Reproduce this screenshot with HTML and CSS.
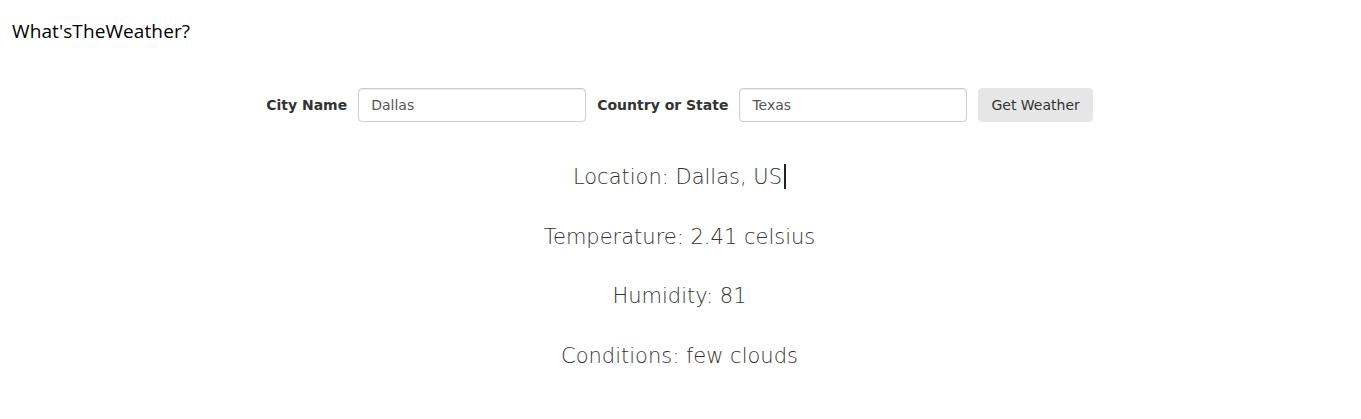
FILE: index.html
```html
<!DOCTYPE html>
<html>
<head>
<meta charset="utf-8">
<title>What'sTheWeather?</title>
<link rel="stylesheet" href="styles.css">
</head>
<body>
<header class="navbar">
  <span class="brand">What'sTheWeather?</span>
</header>
<main class="main">
  <form class="search">
    <label class="field-label" for="city">City Name</label>
    <input class="field-input" id="city" type="text" value="Dallas">
    <label class="field-label" for="state">Country or State</label>
    <input class="field-input" id="state" type="text" value="Texas">
    <button class="btn" type="button">Get Weather</button>
  </form>
  <section class="results">
    <p class="result">Location: Dallas, US<span class="caret"></span></p>
    <p class="result">Temperature: 2.41 celsius</p>
    <p class="result">Humidity: 81</p>
    <p class="result">Conditions: few clouds</p>
  </section>
</main>
</body>
</html>
```
FILE: styles.css
```css
* { box-sizing: border-box; }
body {
  margin: 0;
  font-family: "DejaVu Sans", sans-serif;
  color: #333;
  background: #fff;
}
.navbar {
  padding: 18px 12px 0;
  height: 88px;
}
.brand {
  font-family: "Open Sans", sans-serif;
  font-size: 19px;
  letter-spacing: 0.1px;
  color: #000;
}
.main {
  display: flex;
  flex-direction: column;
  align-items: center;
  padding-right: 2px;
}
.search {
  display: flex;
  align-items: center;
  gap: 11px;
  margin: 0;
}
.field-label {
  font-size: 14px;
  font-weight: bold;
  color: #333;
}
.field-input {
  width: 228px;
  height: 34px;
  padding: 6px 12px;
  border: 1px solid #ccc;
  border-radius: 4px;
  font-family: "DejaVu Sans", sans-serif;
  font-size: 14px;
  color: #555;
  box-shadow: inset 0 1px 1px rgba(0,0,0,.075);
}
.btn {
  height: 34px;
  padding: 6px 12px;
  border: 1px solid #e6e6e6;
  border-radius: 4px;
  background: #e6e6e6;
  font-family: "DejaVu Sans", sans-serif;
  font-size: 14px;
  color: #333;
}
.results {
  margin-top: 42px;
  display: flex;
  flex-direction: column;
  align-items: center;
  gap: 33.5px;
}
.result {
  margin: 0;
  font-size: 21px;
  font-weight: 200;
  color: #333;
  line-height: 26px;
}
.caret {
  display: inline-block;
  width: 2px;
  height: 25px;
  background: #222;
  vertical-align: -5px;
  margin-left: 2px;
}
```
